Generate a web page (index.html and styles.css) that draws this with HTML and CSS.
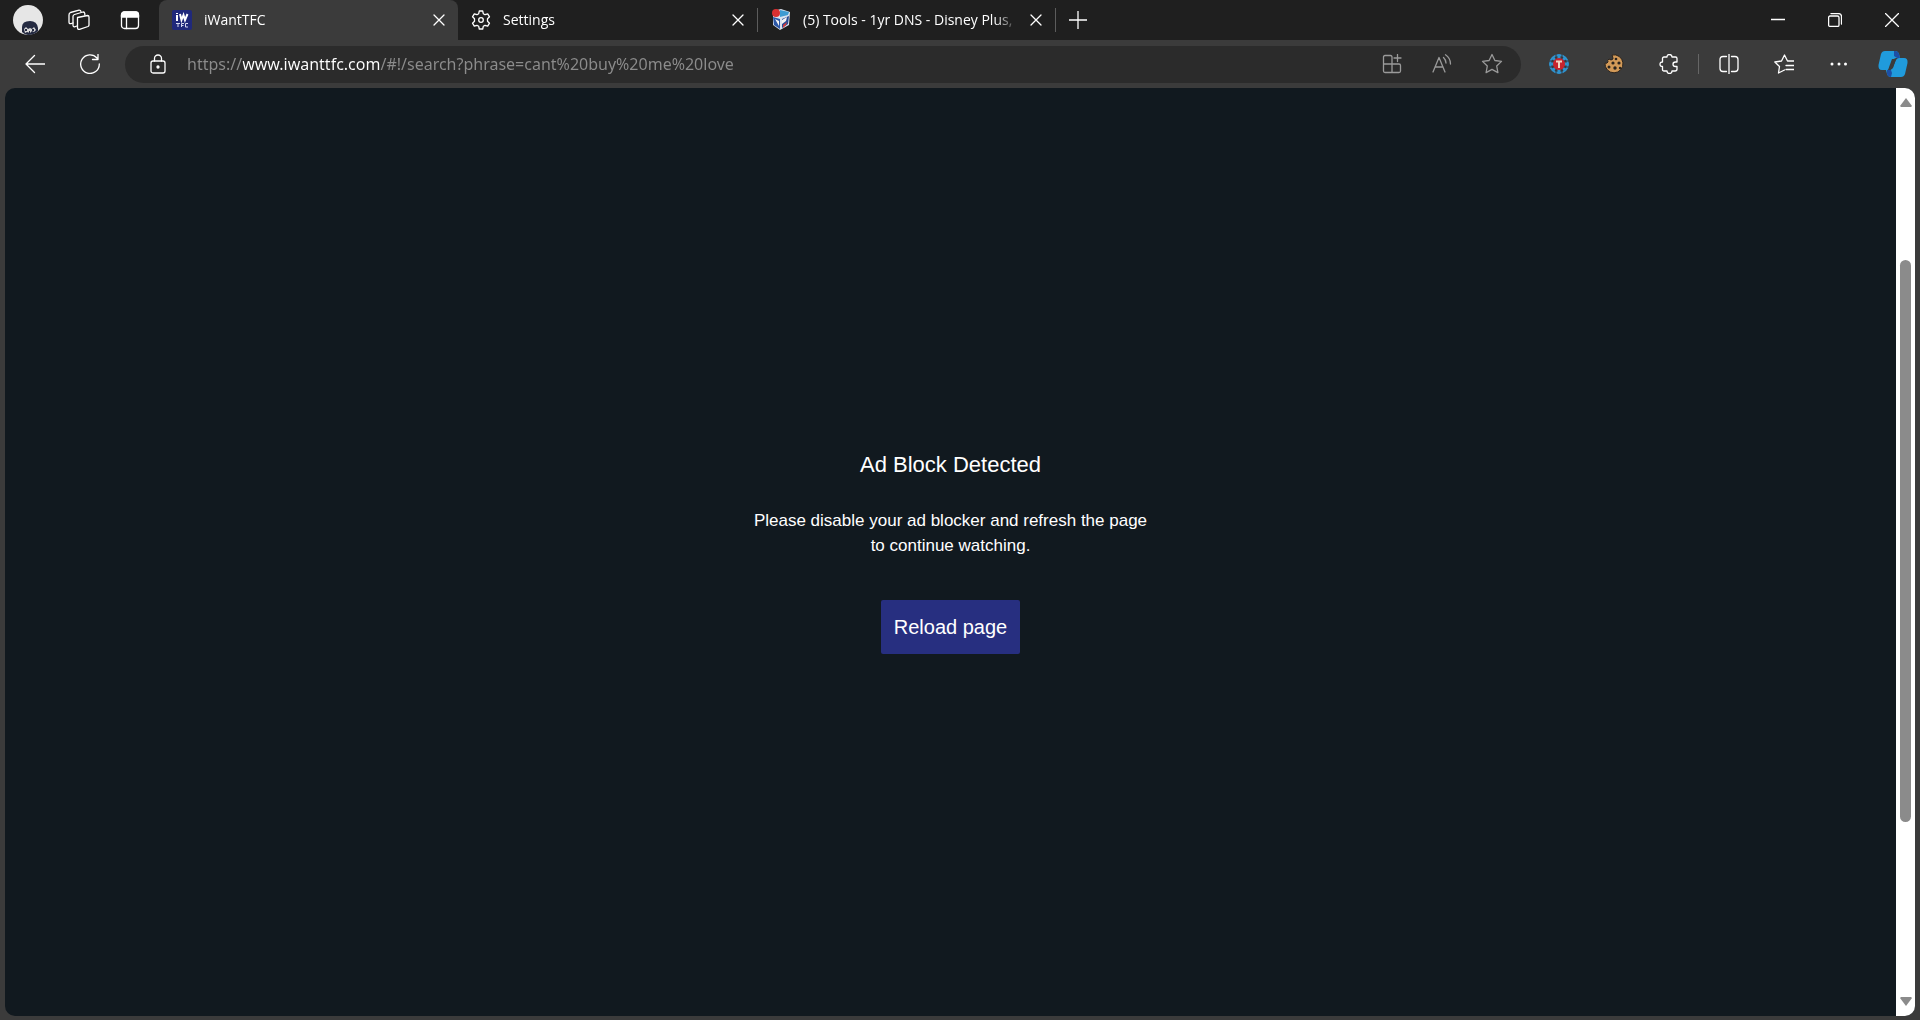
FILE: index.html
```html
<!DOCTYPE html>
<html lang="en">
<head>
    <meta charset="UTF-8">
    <meta name="viewport" content="width=device-width, initial-scale=1.0">
    <title>iWantTFC</title>
    <link rel="stylesheet" href="styles.css">
</head>
<body>
    <header class="tab-bar">
        <div class="tab-tools">
            <button class="tool" aria-label="Profile">
                <svg width="30" height="30" viewBox="0 0 30 30">
                    <circle cx="15" cy="15" r="15" fill="#e6e6e6"/>
                    <path d="M9 27V22Q9 16 17 16Q24 16 25 23V26Q21 30 15 30Q12 30 9 27Z" fill="#252b42"/>
                    <path d="M11 24l2-2 2 2 2-1 2 1 2-2 2 3-2 2-2-1-2 2-3-1-2 1z" fill="#d9d9d9"/>
                    <path d="M13 24v2M20 24v2M16 27h1" stroke="#252b42" stroke-width="2"/>
                </svg>
            </button>
            <button class="tool" aria-label="Workspaces">
                <svg class="line" width="22" height="22" viewBox="0 0 22 22">
                    <path d="M9.500 8.500l10-2q1.500 0 1.500 1.500v8q0 1-1 1.500l-8.500 2.800q-2 .4-2-1.500z"/>
                    <path d="M9 17l-2.500.8Q5 18 5 16V7.500Q5 6 6.500 5.500l8.500-2.500q1.500-.2 1.800 1.500v1.500"/>
                    <path d="M5 14l-2 .6Q1 15 1 13V6q0-2 1.500-2.500l8.500-2.300q1.500-.2 2 1.300"/>
                </svg>
            </button>
            <button class="tool" aria-label="Tab actions">
                <svg class="line" width="20" height="20" viewBox="0 0 20 20">
                    <rect x="1.500" y="2" width="17" height="16.500" rx="3"/>
                    <path d="M1.500 7V5q0-3 3-3h11q3 0 3 3v2z" fill="#fff"/>
                    <path d="M6.500 7v11.500"/>
                </svg>
            </button>
        </div>
        <nav class="tabs">
            <div class="tab active">
                <svg class="favicon" width="20" height="20" viewBox="0 0 20 20">
                    <rect width="20" height="20" rx="2" fill="#20297b"/>
                    <path d="M5 5v6M5 3v1M8 4l1.500 6 2-5 1.500 5 2.500-6" fill="none" stroke="#fff" stroke-width="2"/>
                    <path d="M4 13.500h4M6 13.500V17M9.500 17v-3.500H12M9.500 15.500h2M16 13.500h-2.500V17H16" fill="none" stroke="#d5d8f0"/>
                </svg>
                <span class="tab-title">iWantTFC</span>
                <button class="tab-close" aria-label="Close iWantTFC">
                    <svg class="line" width="12" height="12" viewBox="0 0 12 12"><path d="M1 1l10 10M11 1L1 11"/></svg>
                </button>
            </div>
            <div class="tab">
                <svg class="favicon line" width="20" height="20" viewBox="0 0 20 20">
                    <path d="M8.300 1h3.400l.6 2.700 1.700 1 2.700-.9 1.800 3-2 1.900v2.600l2 1.900-1.800 3-2.700-.9-1.700 1-.6 2.700H8.300l-.6-2.700-1.700-1-2.700.9-1.800-3 2-1.900V8.700l-2-1.900 1.800-3 2.700.9 1.700-1z"/>
                    <circle cx="10" cy="10" r="2.300"/>
                </svg>
                <span class="tab-title">Settings</span>
                <button class="tab-close" aria-label="Close Settings">
                    <svg class="line" width="12" height="12" viewBox="0 0 12 12"><path d="M1 1l10 10M11 1L1 11"/></svg>
                </button>
            </div>
            <div class="tab divided">
                <svg class="favicon" width="20" height="24" viewBox="0 0 20 24">
                    <path d="M2 3L10 1L19 4L18 17L9 22L2 17Z" fill="#d8e2ee"/>
                    <path d="M9 2l9 2-1 3-8 2z" fill="#3d9bd2"/>
                    <path d="M2 9l7 2v10l-6-4z" fill="#2b56a5"/>
                    <path d="M11 11l7-3-1 8-6 4z" fill="#284c94"/>
                    <path d="M4 11l4 7V13zM11 12l5-3-1 4-4 3z" fill="#f4f4f4"/>
                    <path d="M12 17l4-3-1 3-3 3z" fill="#d33b3b"/>
                    <circle cx="5" cy="5" r="4" fill="#d92f31"/>
                </svg>
                <span class="tab-title">(5) Tools - 1yr DNS - Disney Plus,</span>
                <button class="tab-close" aria-label="Close Tools">
                    <svg class="line" width="12" height="12" viewBox="0 0 12 12"><path d="M1 1l10 10M11 1L1 11"/></svg>
                </button>
            </div>
            <button class="new-tab" aria-label="New tab">
                <svg class="line" width="18" height="18" viewBox="0 0 18 18"><path d="M9 0v18M0 9h18"/></svg>
            </button>
        </nav>
        <div class="window-controls">
            <button aria-label="Minimize">
                <svg class="line" width="14" height="14" viewBox="0 0 14 14"><path d="M0 6.500h14"/></svg>
            </button>
            <button aria-label="Restore">
                <svg class="line" width="14" height="14" viewBox="0 0 14 14">
                    <rect x=".6" y="3" width="10.400" height="10.400" rx="1.500"/>
                    <path d="M3 .6h7.500q3 0 3 3V11"/>
                </svg>
            </button>
            <button aria-label="Close window">
                <svg class="line" width="14" height="14" viewBox="0 0 14 14"><path d="M.5.5l13 13M13.500.5l-13 13"/></svg>
            </button>
        </div>
    </header>

    <div class="toolbar">
        <button aria-label="Back">
            <svg class="line" width="20" height="20" viewBox="0 0 20 20"><path d="M20 10H1M9.500 1.500L1 10l8.500 8.500"/></svg>
        </button>
        <button aria-label="Refresh">
            <svg class="line" width="20" height="20" viewBox="0 0 20 20"><path d="M17 4A9.300 9.300 0 1 0 19.300 10M18 0v5.500h-5.500"/></svg>
        </button>
        <form class="address-bar">
            <button type="button" class="lock" aria-label="Site information">
                <svg class="line" width="16" height="20" viewBox="0 0 16 20">
                    <rect x="1" y="7" width="14" height="12" rx="2"/>
                    <path d="M4.500 7V4.500a3.500 3.500 0 0 1 7 0V7"/>
                    <circle cx="8" cy="13" r="1" fill="#fff"/>
                </svg>
            </button>
            <input class="url" type="text" aria-label="Address" value="https://www.iwanttfc.com/#!/search?phrase=cant%20buy%20me%20love">
            <button type="button" class="dim" aria-label="App available">
                <svg class="line" width="20" height="20" viewBox="0 0 20 20">
                    <path d="M10 10V3q0-1.500-1.500-1.500H3Q1.500 1.500 1.500 3v14q0 1.500 1.500 1.500h14q1.500 0 1.500-1.500v-5.500q0-1.500-1.500-1.500H1.500M10 10v8.500M15.500.5v7M12 4h7"/>
                </svg>
            </button>
            <button type="button" class="dim" aria-label="Read aloud">
                <svg class="line" width="20" height="20" viewBox="0 0 20 20">
                    <path d="M1 18L7 3.500 13 18M3 13h8M11.500 3.500Q14 6 14 9M13.500.8Q18.500 4 18.500 10"/>
                </svg>
            </button>
            <button type="button" class="dim" aria-label="Add to favorites">
                <svg class="line" width="22" height="22" viewBox="0 0 22 22">
                    <path d="M11 1.500l2.900 6 6.600.9-4.800 4.600 1.200 6.600-5.900-3.200-5.900 3.200 1.200-6.600L1.500 8.400l6.600-.9z"/>
                </svg>
            </button>
        </form>
        <button aria-label="Blocker extension">
            <svg width="20" height="20" viewBox="0 0 20 20">
                <circle cx="10" cy="10" r="9" fill="none" stroke="#2f93cf" stroke-width="2"/>
                <path d="M4 4l12 12M16 4L4 16M1 10h18M10 1v18" stroke="#2f93cf" stroke-width="3"/>
                <path d="M7 0v20M13 0v20M0 7h20M0 13h20" stroke="#333b45"/>
                <circle cx="10" cy="10" r="6" fill="#c7242e"/>
                <path d="M7 7.500h6M10 7v7" stroke="#f3d2c0" stroke-width="2"/>
            </svg>
        </button>
        <button aria-label="Cookie extension">
            <svg width="20" height="20" viewBox="0 0 20 20">
                <path d="M8 1A9 9 0 1 1 1 9Q3 10 4 8Q3 6 5 5Q7 7 9 5Q9 3 8 1Z" fill="#d39a58" stroke="#2b241e"/>
                <g fill="#2b241e">
                    <circle cx="12" cy="5" r="1.300"/>
                    <circle cx="9" cy="9" r="1.600"/>
                    <circle cx="15" cy="9" r="1.600"/>
                    <circle cx="5" cy="13" r="1.500"/>
                    <circle cx="11" cy="14" r="1.700"/>
                    <circle cx="16" cy="14" r="1.200"/>
                </g>
            </svg>
        </button>
        <button aria-label="Extensions">
            <svg class="line" width="20" height="20" viewBox="0 0 20 20">
                <path d="M5 3h3q0-2.500 2.500-2.500T13 3h3.500q1.500 0 1.500 1.500V8h-1.500q-2.500 0-2.500 2.200t2.500 2.300H18V15q0 2-2 2h-3q0 2.500-2.500 2.500T8 17H5q-1.500 0-1.500-1.500v-3Q1 12.500 1 10.200T3.500 8V4.500Q3.500 3 5 3z"/>
            </svg>
        </button>
        <span class="separator"></span>
        <button aria-label="Split screen">
            <svg class="line" width="20" height="20" viewBox="0 0 20 20">
                <path d="M7.500 2.500H4q-3 0-3 3v9q0 3 3 3h3.500M12.500 2.500H16q3 0 3 3v9q0 3-3 3h-3.500M10 0v20"/>
            </svg>
        </button>
        <button aria-label="Favorites">
            <svg class="line" width="20" height="20" viewBox="0 0 20 20">
                <path d="M20 7h-6.500L10.500 1 7.500 7 .8 8l4.700 4.500L4.500 19l6-3M12 11.500h8M12 15.500h8"/>
            </svg>
        </button>
        <button aria-label="More">
            <svg width="18" height="6" viewBox="0 0 18 6" fill="#fff">
                <circle cx="2" cy="3" r="1.500"/><circle cx="9" cy="3" r="1.500"/><circle cx="15.500" cy="3" r="1.500"/>
            </svg>
        </button>
        <button class="copilot" aria-label="Copilot">
            <svg width="30" height="28" viewBox="0 0 30 28">
                <path d="M7 1h10q3 0 4 3l1 4h-4q-2 0-3 3l-3 8q-1 1-3 1H4q-4 0-3.500-5L3 4q1-3 4-3z" fill="#209bdc"/>
                <path d="M23 27H13q-3 0-4-3l-1-4h4q2 0 3-3l3-7q1-2 3-2h5q4 0 3.500 5L27 24q-1 3-4 3z" fill="#209bdc"/>
                <path d="M16 1h1q3 0 4 3l1 4h-3l-3-2zM9 20h4l1 3-1 4q-3 0-4-3z" fill="#1d4fa6"/>
                <path d="M14 9h4l-3 9-3 2h-2z" fill="#3b3b3b"/>
            </svg>
        </button>
    </div>

    <div class="viewport">
        <main class="page">
            <h1>Ad Block Detected</h1>
            <p>Please disable your ad blocker and refresh the page<br>to continue watching.</p>
            <button class="reload-btn">Reload page</button>
        </main>
        <div class="scrollbar">
            <svg width="12" height="9" viewBox="0 0 12 9"><path d="M6 0l6 8-1 1H1L0 8z"/></svg>
            <div class="track"><div class="thumb"></div></div>
            <svg width="12" height="9" viewBox="0 0 12 9"><path d="M6 9l6-8-1-1H1L0 1z"/></svg>
        </div>
    </div>
</body>
</html>
```
FILE: styles.css
```css
* {
    box-sizing: border-box;
}

body {
    margin: 0;
    height: 100vh;
    display: flex;
    flex-direction: column;
    overflow: hidden;
    background-color: #3b3b3b;
    color: #fff;
    font-family: "Open Sans", "Noto Sans", sans-serif;
    font-size: 14px;
}

button {
    display: flex;
    align-items: center;
    justify-content: center;
    padding: 0;
    border: none;
    background: none;
    color: inherit;
    cursor: pointer;
}

svg {
    flex: none;
}

.line {
    fill: none;
    stroke: #fff;
    stroke-width: 1.3;
    stroke-linecap: round;
    stroke-linejoin: round;
}

/* Tabs */
.tab-bar {
    display: flex;
    flex: none;
    height: 40px;
    background-color: #1f1f1f;
}

.tab-tools {
    display: flex;
    padding: 0 4px 0 2px;
}

.tool {
    width: 51px;
}

.tabs {
    display: flex;
    flex: 1;
    min-width: 0;
}

.tab {
    display: flex;
    align-items: center;
    width: 299px;
    padding: 0 13px;
}

.tab.active {
    background-color: #3b3b3b;
    border-radius: 8px 8px 0 0;
}

.divided {
    border-left: 1px solid #5c5c5c;
    border-right: 1px solid #5c5c5c;
    height: 24px;
    align-self: center;
}

.favicon {
    margin-right: 12px;
}

.tab-title {
    flex: 1;
    overflow: hidden;
    white-space: nowrap;
    line-height: 20px;
    mask-image: linear-gradient(to left, transparent, #000 24px);
}

.tab-close {
    width: 12px;
    height: 24px;
    margin-left: 12px;
}

.new-tab {
    width: 44px;
}

.window-controls {
    display: flex;
}

.window-controls button {
    width: 57px;
}

/* Toolbar */
.toolbar {
    display: flex;
    align-items: center;
    flex: none;
    height: 48px;
    padding-left: 7px;
}

.toolbar > button {
    width: 55px;
    height: 40px;
}

.toolbar > .copilot {
    width: 54px;
}

.address-bar {
    display: flex;
    align-items: center;
    flex: 1;
    min-width: 0;
    height: 37px;
    margin: 0 10px 0 8px;
    padding: 0 4px;
    border-radius: 20px;
    background-color: #2b2b2b;
}

.lock {
    width: 58px;
    height: 36px;
}

.url {
    flex: 1;
    min-width: 0;
    height: 36px;
    padding: 0;
    border: none;
    outline: none;
    font: 16px "Noto Sans", sans-serif;
    /* host is brighter than the rest of the address */
    color: transparent;
    background: linear-gradient(to right, #8c8c8c 56px, #fff 56px, #fff 193px, #8c8c8c 193px);
    background-clip: text;
    -webkit-background-clip: text;
}

.dim {
    width: 50px;
    height: 36px;
}

.dim .line {
    stroke: #9a9a9a;
}

.separator {
    width: 1px;
    height: 20px;
    margin: 0 2px;
    background-color: #666;
}

/* Page area */
.viewport {
    display: flex;
    flex: 1;
    min-height: 0;
    margin: 0 5px 4px;
    border-radius: 10px;
    overflow: hidden;
    background-color: #11191f;
}

.page {
    display: flex;
    flex: 1;
    flex-direction: column;
    align-items: center;
    justify-content: center;
    font-family: "Liberation Sans", Arial, sans-serif;
    text-align: center;
}

.page h1 {
    margin: 0 0 28px;
    font-size: 22px;
    font-weight: normal;
    line-height: 30px;
}

.page p {
    margin: 0 0 42px;
    font-size: 17px;
    line-height: 25px;
}

.reload-btn {
    height: 54px;
    padding: 0 13px;
    border-radius: 2px;
    background-color: #272f80;
    font-family: inherit;
    font-size: 20px;
}

.scrollbar {
    display: flex;
    flex-direction: column;
    align-items: center;
    width: 19px;
    padding: 10px 0;
    background-color: #fff;
    fill: #8b8b8b;
}

.track {
    display: flex;
    flex: 1;
    flex-direction: column;
    width: 11px;
}

.track::before,
.track::after {
    content: "";
    flex: 153;
}

.track::after {
    flex: 175;
}

.thumb {
    flex: 563;
    border-radius: 6px;
    background-color: #8b8b8b;
}
```
